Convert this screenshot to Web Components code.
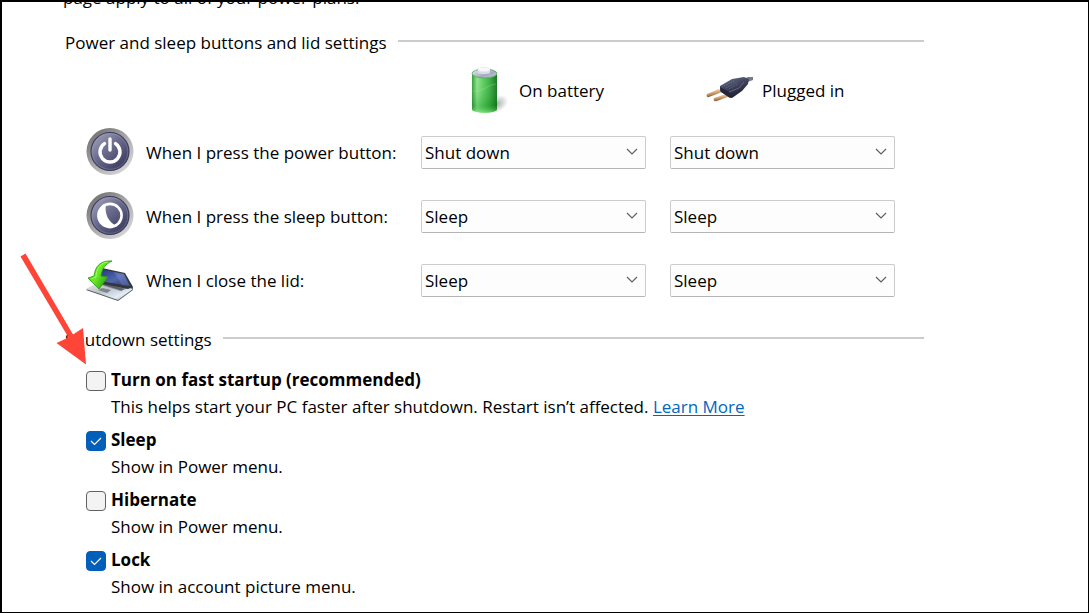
<!DOCTYPE html>
<html lang="en">
<head>
<meta charset="utf-8">
<meta name="viewport" content="width=device-width, initial-scale=1">
<title>Power Options</title>
<style>
  html, body { height: 100%; margin: 0; }
  body { font: 17px/24px "Open Sans", "Noto Sans", sans-serif; color: #000; background: #fff; }
</style>
</head>
<body>
<power-page>
  <settings-group heading="Power and sleep buttons and lid settings">
    <power-columns>
      <power-source kind="battery">On battery</power-source>
      <power-source kind="plug">Plugged in</power-source>
    </power-columns>
    <action-row icon="power" label="When I press the power button:" value="Shut down"></action-row>
    <action-row icon="sleep" label="When I press the sleep button:" value="Sleep"></action-row>
    <action-row icon="lid" label="When I close the lid:" value="Sleep"></action-row>
  </settings-group>
  <settings-group heading="Shutdown settings" compact>
    <check-option label="Turn on fast startup (recommended)">This helps start your PC faster after shutdown. Restart isn’t affected. <learn-link></learn-link></check-option>
    <check-option label="Sleep" checked>Show in Power menu.</check-option>
    <check-option label="Hibernate">Show in Power menu.</check-option>
    <check-option label="Lock" checked>Show in account picture menu.</check-option>
  </settings-group>
</power-page>

<script>
const ICONS = {
  battery: `<svg viewBox="0 0 48 48" width="48" height="48" aria-hidden="true">
    <defs>
      <linearGradient id="g"><stop offset="0" stop-color="#2f9a34"/><stop offset=".2" stop-color="#8ae587"/><stop offset=".42" stop-color="#5fd060"/><stop offset=".72" stop-color="#35ad3b"/><stop offset="1" stop-color="#12721c"/></linearGradient>
      <linearGradient id="v" x2="0" y2="1"><stop offset="0" stop-color="#fff" stop-opacity="0"/><stop offset=".8" stop-color="#0b7a1c" stop-opacity=".25"/><stop offset="1" stop-color="#8cf08a" stop-opacity=".6"/></linearGradient>
      <linearGradient id="t" x2="1" y2="1"><stop offset="0" stop-color="#eceef3"/><stop offset=".6" stop-color="#a6a9c4"/><stop offset="1" stop-color="#c9ccd9"/></linearGradient>
      <radialGradient id="s"><stop offset="0" stop-color="#777" stop-opacity=".6"/><stop offset="1" stop-color="#777" stop-opacity="0"/></radialGradient>
    </defs>
    <ellipse cx="34" cy="37" rx="12" ry="8" fill="url(#s)" transform="rotate(-30 34 37)"/>
    <path d="M9 7v35c0 5 25 5 25 0V7z" fill="url(#g)"/>
    <path d="M9 7v35c0 5 25 5 25 0V7z" fill="url(#v)"/>
    <ellipse cx="21.500" cy="6.500" rx="12.500" ry="4.500" fill="url(#t)" stroke="#51a858" stroke-width=".8"/>
    <path d="M15 2.500c0-3 12-3 12 0v3c0 2-12 2-12 0z" fill="#d9dde6"/>
    <ellipse cx="21" cy="2.500" rx="6" ry="2" fill="#f7f8fa"/>
    <path d="M10 24c8 2 14-6 23-7" stroke="#a4efa0" stroke-opacity=".3" fill="none"/>
  </svg>`,
  plug: `<svg viewBox="0 0 48 48" width="48" height="48" aria-hidden="true">
    <defs>
      <linearGradient id="b" x2=".5" y2="1"><stop offset="0" stop-color="#777b91"/><stop offset=".45" stop-color="#464963"/><stop offset="1" stop-color="#1c1d30"/></linearGradient>
      <linearGradient id="p" x2=".3" y2="1"><stop offset="0" stop-color="#fbe2b8"/><stop offset=".5" stop-color="#dcab74"/><stop offset="1" stop-color="#7b5438"/></linearGradient>
    </defs>
    <path d="M36 13l6-3 5 0v3l-8 3z" fill="#777b82"/>
    <path d="M13 22L1 27c-1 2 0 4 2 3l13-5z" fill="url(#p)"/>
    <path d="M20 27L8 31c-1 2 0 4 3 3l13-5z" fill="url(#p)"/>
    <path d="M14 19l12-7 12-2 5 2-1 5-6 7-10 7-3-1-9-6z" fill="url(#b)"/>
    <path d="M23 25l-9-5 1 5 9 6 2-1z" fill="#25263a"/>
    <path d="M23 25l10-4 5-6" stroke="#767a96" fill="none" stroke-width=".7"/>
    <path d="M18 19l10-5M20 21l11-6M23 22l9-5" stroke="#858aa0" stroke-width=".6" stroke-dasharray="1 1"/>
  </svg>`,
  disc: `<defs>
      <linearGradient id="r" x1=".15" y1=".1" x2=".85" y2=".9"><stop offset="0" stop-color="#747474"/><stop offset=".5" stop-color="#aaa"/><stop offset="1" stop-color="#d5d5d5"/></linearGradient>
      <linearGradient id="i" x1=".15" y1=".1" x2=".85" y2=".9"><stop offset="0" stop-color="#9799b2"/><stop offset=".45" stop-color="#68698b"/><stop offset="1" stop-color="#3c3b60"/></linearGradient>
    </defs>
    <circle cx="24" cy="23.500" r="23.500" fill="url(#r)"/>
    <circle cx="24" cy="23.500" r="19" fill="url(#i)" stroke="#3d3c5c" stroke-width="1.200"/>
    <circle cx="24" cy="23.500" r="17.800" fill="none" stroke="#a1a2bb" stroke-opacity=".45" stroke-width=".8"/>`,
  lid: `<svg viewBox="0 0 48 48" width="48" height="48" aria-hidden="true">
    <defs>
      <linearGradient id="s" x2="1" y2="1"><stop offset="0" stop-color="#24347c"/><stop offset=".55" stop-color="#5167ad"/><stop offset="1" stop-color="#27356f"/></linearGradient>
      <linearGradient id="k" x2="1" y2="1"><stop offset="0" stop-color="#f2f3f5"/><stop offset=".45" stop-color="#bcc1c8"/><stop offset=".75" stop-color="#e2edf8"/><stop offset="1" stop-color="#8e949c"/></linearGradient>
      <linearGradient id="a" x2="1" y2=".6"><stop offset="0" stop-color="#37b90f"/><stop offset=".5" stop-color="#67ec26"/><stop offset="1" stop-color="#279411"/></linearGradient>
    </defs>
    <path d="M0 34l32 11 15-11v-3L16 24z" fill="#55585e"/>
    <path d="M0 33l32 11 15-11-31-9z" fill="url(#k)"/>
    <path d="M13 28l22 7 8-4-24-6z" fill="#5a5f67"/>
    <path d="M15 29l21 6M19 27l21 6" stroke="#a1a6ae" stroke-width=".6"/>
    <path d="M12 34l9 3 4-3-9-2z" fill="#7e848c"/>
    <path d="M12 12l4 0 23 5 8 14-5 2-30-6z" fill="#34363e"/>
    <path d="M14 13l24 5 6 12-30-5z" fill="url(#s)"/>
    <path d="M28 16l10 2 6 12-8-1z" fill="#9aaee2" fill-opacity=".28"/>
    <path d="M26 5C15 4 9 10 8 20l-6 2 11 11 9-12-7-1c1-7 4-12 11-15z" fill="url(#a)" stroke="#2a9a11" stroke-width=".8"/>
    <path d="M22 6C14 7 10 13 10 21l-5 2" stroke="#b7ff75" stroke-opacity=".8" fill="none"/>
  </svg>`
};
ICONS.power = `<svg viewBox="0 0 48 48" width="48" height="48" aria-hidden="true">${ICONS.disc}
    <path d="M18.500 15.600a10 10 0 1 0 11 0" fill="none" stroke="#fff" stroke-width="3.400" stroke-linecap="round"/>
    <path d="M24 11v11" stroke="#fff" stroke-width="3.400" stroke-linecap="round"/></svg>`;
ICONS.sleep = `<svg viewBox="0 0 48 48" width="48" height="48" aria-hidden="true">${ICONS.disc}
    <circle cx="24" cy="23.500" r="11.600" fill="none" stroke="#fff" stroke-width="2.600"/>
    <path d="M20 12a12 12 0 1 0 11 22c-8-3-13-12-11-22z" fill="#fff"/></svg>`;

class Base extends HTMLElement {
  connectedCallback() {
    if (this.shadowRoot) return;
    this.attachShadow({ mode: "open" }).innerHTML = this.render();
  }
}

customElements.define("power-page", class extends Base {
  render() { return `<style>
    :host { display: block; box-sizing: border-box; position: relative; height: 100%; overflow: hidden;
      border: solid #000; border-width: 2px 1px 1px 2px; }
    main { max-width: 861px; padding: 0 24px 0 61px; margin-top: -16px; }
    p { margin: 0 0 21px; }
    .groups { padding-left: 2px; }
    .pointer { position: absolute; left: 18px; top: 248px; pointer-events: none; }
  </style>
  <main><p>page apply to all of your power plans.</p><div class="groups"><slot></slot></div></main>
  <svg class="pointer" width="72" height="120" viewBox="20 250 72 120" aria-hidden="true">
    <path d="M20.500 256.500l5-3 47.500 81 10-6.500 3 36.500-29.500-21.500 12-5.500z" fill="#ff4438"/>
  </svg>`; }
});

customElements.define("settings-group", class extends Base {
  render() { return `<style>
    :host { display: block; margin-bottom: 24px; }
    header { display: flex; align-items: center; gap: 11px; margin-bottom: 10px; }
    :host([compact]) header { margin-bottom: 14px; }
    h2 { margin: 0; font: inherit; }
    i { flex: 1; height: 2px; background: #ccc; margin-bottom: 4px; }
    .body { display: grid; gap: 16px; padding: 0 29px 0 21px; }
    :host([compact]) .body { gap: 6px; }
  </style>
  <section><header><h2>${this.getAttribute("heading")}</h2><i></i></header>
  <div class="body"><slot></slot></div></section>`; }
});

const COLUMNS = "grid-template-columns: 311px minmax(0, 1fr) minmax(0, 1fr); column-gap: 24px;";

customElements.define("power-columns", class extends Base {
  render() { return `<style>
    :host { display: grid; ${COLUMNS} height: 47px; align-items: end; }
    ::slotted(:first-child) { grid-column: 2; }
  </style><slot></slot>`; }
});

customElements.define("power-source", class extends Base {
  render() { return `<style>
    :host { display: flex; align-items: center; gap: 8px; padding-left: 42px; }
    :host([kind="plug"]) { padding-left: 36px; }
    svg { display: block; flex: none; margin-top: 2px; margin-bottom: -2px; }
    span { padding-top: 4px; }
  </style>${ICONS[this.getAttribute("kind")]}<span><slot></slot></span>`; }
});

customElements.define("action-row", class extends Base {
  render() {
    const label = this.getAttribute("label"), value = this.getAttribute("value");
    const options = ["Do nothing", "Sleep", "Hibernate", "Shut down"]
      .map(o => `<option${o === value ? " selected" : ""}>${o}</option>`).join("");
    return `<style>
    :host { display: grid; ${COLUMNS} height: 48px; align-items: center; }
    .name { display: flex; align-items: center; gap: 12px; white-space: nowrap; }
    label { padding-top: 2px; }
    svg { display: block; flex: none; }
    select { appearance: none; box-sizing: border-box; width: 100%; height: 33px; margin: 0; padding: 2px 28px 0 3px;
      font: inherit; color: inherit; border: 1px solid #ccc; border-bottom-color: #b5b5b5; border-radius: 2px;
      background: #fdfdfd url("data:image/svg+xml,%3Csvg xmlns='http://www.w3.org/2000/svg' width='12' height='8'%3E%3Cpath d='M1 1l5 5 5-5' fill='none' stroke='%23606060' stroke-width='1.2'/%3E%3C/svg%3E") no-repeat right 7px center; }
  </style>
  <div class="name">${ICONS[this.getAttribute("icon")]}<label for="battery">${label}</label></div>
  <select id="battery">${options}</select>
  <select id="plugged" aria-label="${label} Plugged in">${options}</select>`; }
});

customElements.define("check-option", class extends Base {
  render() { return `<style>
    :host { display: grid; grid-template-columns: 20px 1fr; column-gap: 5px; line-height: 27px; }
    input { appearance: none; box-sizing: border-box; width: 20px; height: 20px; margin: 5px 0 0;
      border: 1px solid #626262; border-radius: 4px; background: #f3f3f3; }
    input:checked { border-color: #005fb8; background: #005fb8 url("data:image/svg+xml,%3Csvg xmlns='http://www.w3.org/2000/svg' width='12' height='10'%3E%3Cpath d='M1 5l3.500 3.500L11 2' fill='none' stroke='white' stroke-width='1.1'/%3E%3C/svg%3E") no-repeat center; }
    label { font-weight: 700; }
    div { grid-column: 2; }
  </style>
  <input type="checkbox" id="c" aria-describedby="d"${this.hasAttribute("checked") ? " checked" : ""}>
  <label for="c">${this.getAttribute("label")}</label>
  <div id="d"><slot></slot></div>`; }
});

customElements.define("learn-link", class extends Base {
  render() { return `<style>
    :host { display: inline; }
    a { color: #0066c0; text-decoration: underline; text-decoration-thickness: 1px; text-underline-offset: 2px; }
  </style><a href="#learn-more">Learn More</a>`; }
});
</script>
</body>
</html>
